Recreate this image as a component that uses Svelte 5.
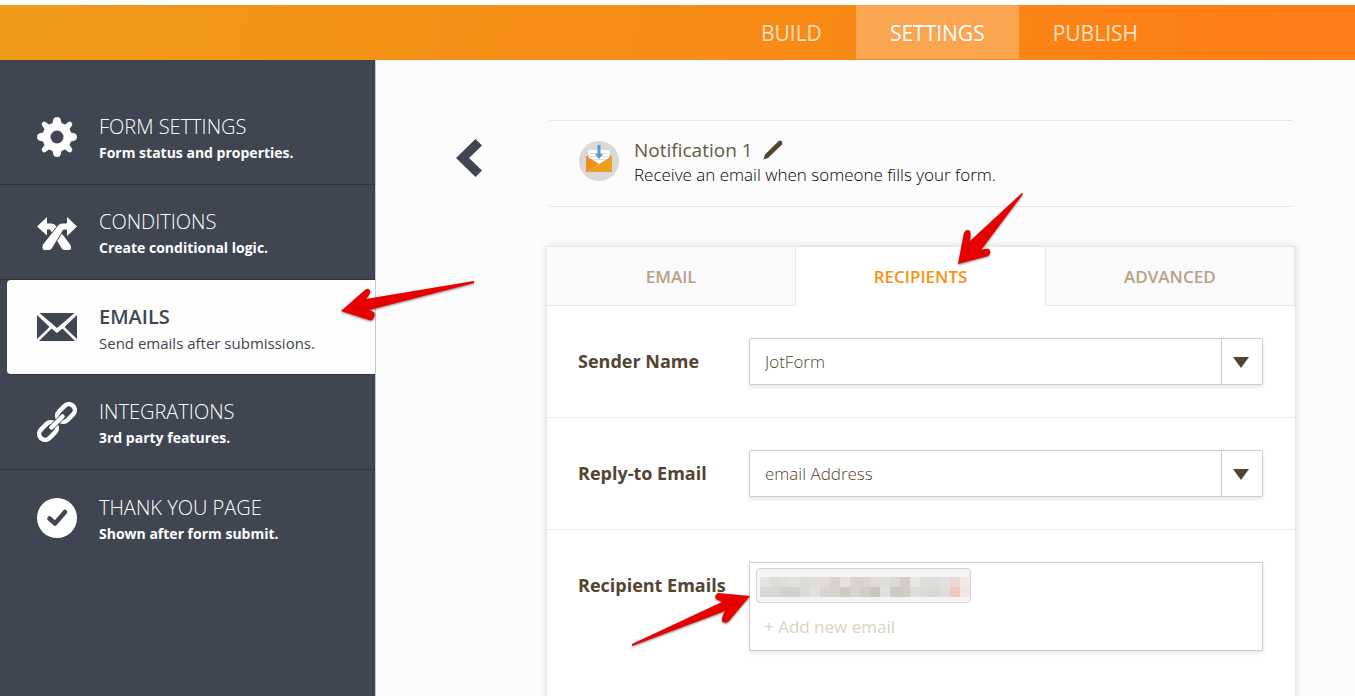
<script>
  const tabs = ["BUILD", "SETTINGS", "PUBLISH"];
  const panels = ["EMAIL", "RECIPIENTS", "ADVANCED"];
  const menu = [
    { icon: "gear", title: "FORM SETTINGS", text: "Form status and properties." },
    { icon: "conditions", title: "CONDITIONS", text: "Create conditional logic." },
    { icon: "mail", title: "EMAILS", text: "Send emails after submissions." },
    { icon: "link", title: "INTEGRATIONS", text: "3rd party features." },
    { icon: "check", title: "THANK YOU PAGE", text: "Shown after form submit." },
  ];
  // hidden address, two rows of blocks
  const blocks = [
    "#e4e3e2", "#dddcda", "#dfdedd", "#e1e1e1", "#dddbd8", "#e0dcda", "#dedcda", "#d6d2cd", "#e2e2e4", "#d8d4d0", "#d8d5d1", "#dddcda", "#dfdedb", "#dcdad8", "#d2cfc9", "#e7e6e5", "#dfdddb", "#dedddb", "#e3e1e0", "#efd6d0", "#f4e7e4",
    "#d8d7d3", "#d8d7d2", "#d5d2cd", "#d4d1cc", "#dbdad7", "#e0e0e0", "#d8d5d1", "#d7d4d0", "#cdc9c3", "#d7d5d0", "#d0ccc6", "#c9c4be", "#e0e0e0", "#cdcac3", "#cfccc5", "#dddcda", "#dbdad7", "#d8d8d3", "#dfdedc", "#ecc8be", "#f2e6e3",
  ];

  let activeTab = $state("SETTINGS");
  let activeMenu = $state("EMAILS");
  let activePanel = $state("RECIPIENTS");
  let sender = $state("JotForm");
  let replyTo = $state("email Address");
  let newEmail = $state("");
</script>

{#snippet icon(name)}
  <svg class="icon" viewBox="0 0 40 40" aria-hidden="true">
    {#if name === "gear"}
      <path fill="currentColor" fill-rule="evenodd" d="M16.500 2Q17 0 20 0t3.500 2l1 4 3.500 1.500L31.500 5Q33 4 34.500 5.500T35 8.500L32.500 12l1.500 3.500 4 1Q40 17 40 20t-2 3.500l-4 1-1.500 3.500 2.500 3.500Q36 33 34.500 34.500t-3 .500L28 32.500 24.500 34l-1 4Q23 40 20 40t-3.500-2l-1-4-3.500-1.500L8.500 35Q7 36 5.500 34.500T5 31.500L7.500 28 6 24.500l-4-1Q0 23 0 20t2-3.500l4-1L7.500 12 5 8.500Q4 7 5.500 5.500T8.500 5L12 7.500 15.500 6zM20 13.500a6.500 6.500 0 1 0 0 13 6.500 6.500 0 0 0 0-13z" />
    {:else if name === "conditions"}
      <path fill="currentColor" d="M0 14.500L10 5v6.500h4.500q3 0 5 3L33.500 33q2 5-2 5h-4q-2 0-3-2L13 17.500h-3v6z" />
      <path fill="currentColor" stroke="#3f4651" stroke-width="1" d="M40.500 14.500L29.500 4V11H25q-3 0-5.500 4L5.500 32.500q-2 6 2.500 6h4q2 0 3.500-2.500L26.500 18h3v7z" />
    {:else if name === "mail"}
      <path fill="currentColor" d="M2.500 6h35L20 21zM0 8l12.500 12L0 32zM40 8v24L27.500 20zM2 34l12.500-12.500L20 26l5.500-4.500L38 34z" />
    {:else if name === "link"}
      <g fill="none" stroke="currentColor" stroke-width="4.500">
        <rect x="-10" y="-6" width="20" height="12" rx="6" transform="translate(29 11) rotate(-45)" />
        <rect x="-10" y="-6" width="20" height="12" rx="6" transform="translate(11 29) rotate(-45)" />
      </g>
      <path stroke="#3f4651" stroke-width="6" stroke-linecap="round" d="M14.500 25.500l11-11" />
      <path stroke="currentColor" stroke-width="4.500" stroke-linecap="round" d="M14.500 25.500l11-11" />
    {:else}
      <circle cx="20" cy="20" r="20" fill="currentColor" />
      <path fill="none" stroke="#3f4651" stroke-width="4.500" stroke-linecap="round" stroke-linejoin="round" d="M12.500 20.500l5.500 5L28 14" />
    {/if}
  </svg>
{/snippet}

<header>
  <nav>
    {#each tabs as tab}
      <button class:active={activeTab === tab} onclick={() => (activeTab = tab)}>{tab}</button>
    {/each}
  </nav>
</header>

<div class="page">
  <aside>
    {#each menu as item}
      <button class="menuItem" class:active={activeMenu === item.title} onclick={() => (activeMenu = item.title)}>
        {@render icon(item.icon)}
        <span class="menuText">
          <span class="menuTitle">{item.title}</span>
          <span class="menuSub">{item.text}</span>
        </span>
      </button>
    {/each}
    <svg class="pointer pointerMenu" viewBox="0 0 134 42" aria-hidden="true">
      <path d="M0 31L24 10q4-3 5 1 1 2-4 8L133 1v2L28 30l5 2q2 3-1 7-1 2-4 1z" />
    </svg>
  </aside>

  <main>
    <button class="back" aria-label="Back">
      <svg viewBox="0 0 26 38" aria-hidden="true"><path fill="#3f4651" d="M19.500 0L26 6.500 13 19l13 12.500L19.500 38 0 19z" /></svg>
    </button>

    <div class="content">
      <section class="card">
        <svg class="badge" viewBox="0 0 40 40" aria-hidden="true">
          <circle cx="20" cy="20" r="20" fill="#d9d9d9" />
          <path fill="#d98a20" d="M7 16l4-3h18l4 3v4H7z" />
          <path fill="#fff" d="M9.500 9h21v14h-21z" />
          <path stroke="#ddd" d="M11 12.500h18M11 15.500h18M11 18.500h18" />
          <path fill="#f28c20" d="M7 15l13 8L7 31z" />
          <path fill="#eba024" d="M33 15v16H7l13-8z" />
          <path fill="#5599d4" d="M18.500 4h3v9H24l-4 5-4-5h2.500z" />
        </svg>
        <div>
          <h1>
            Notification 1
            <svg viewBox="0 0 20 20" aria-hidden="true"><path fill="#534431" d="M.500 19.500l1.500-5L15.500 1.200Q17 0 18.500 1.200T19 4.500L5 18z" /></svg>
          </h1>
          <p>Receive an email when someone fills your form.</p>
        </div>
      </section>

      <section class="panel">
        <div class="panelTabs">
          {#each panels as name}
            <button class:active={activePanel === name} onclick={() => (activePanel = name)}>{name}</button>
          {/each}
          <svg class="pointer pointerTab" viewBox="0 0 66 74" aria-hidden="true">
            <path d="M0 72L6 41q2-5 6-2 1 1 0 10L64 1l1 1-42 56q6-2 8-1 3 4-1 7z" />
          </svg>
        </div>

        <div class="row">
          <label for="sender">Sender Name</label>
          <div class="selectBox">
            <select id="sender" bind:value={sender}>
              <option>JotForm</option>
            </select>
          </div>
        </div>

        <div class="row">
          <label for="reply">Reply-to Email</label>
          <div class="selectBox">
            <select id="reply" bind:value={replyTo}>
              <option>email Address</option>
            </select>
          </div>
        </div>

        <div class="row last">
          <label for="recipients">Recipient Emails</label>
          <div class="recipients">
            <div class="chip">
              {#each blocks as color}
                <span style="background: {color}"></span>
              {/each}
            </div>
            <input id="recipients" type="email" placeholder="+ Add new email" bind:value={newEmail} />
            <svg class="pointer pointerField" viewBox="0 0 120 58" aria-hidden="true">
              <path d="M119 5L98 30q-3 3-6 1-3-2 2-11L1 55v-2L91 11 85 8q-2-4 2-6z" />
            </svg>
          </div>
        </div>
      </section>
    </div>
  </main>
</div>

<style>
  :global(body) {
    background: #fcfcfc;
    font-family: "Open Sans", "Noto Sans", sans-serif;
    overflow: hidden;
  }
  button {
    border: none;
    background: none;
    padding: 0;
    font-family: inherit;
    cursor: pointer;
  }
  header {
    border-top: 5px solid #fff;
    background: linear-gradient(100deg, #f09a1a, #f98815 65%, #ff7b16);
    background-clip: padding-box;
  }
  nav {
    display: flex;
    justify-content: flex-end;
    height: 55px;
    padding-right: 183px;
  }
  nav button {
    height: 54px;
    padding: 2px 34px 0;
    font-size: 21px;
    color: #fde0c0;
  }
  nav button.active {
    background: #faa550;
    color: #fff;
  }
  .page {
    display: flex;
    min-height: calc(100vh - 60px);
  }
  aside {
    position: relative;
    flex: none;
    width: 376px;
    box-sizing: border-box;
    padding-top: 30px;
    background: #3f4651;
    border-right: 1px solid #c5c8cb;
  }
  .menuItem {
    display: flex;
    align-items: center;
    gap: 22px;
    width: 100%;
    height: 95px;
    padding: 0 0 0 37px;
    border-bottom: 1px solid #2f3440;
    color: #fff;
    text-align: left;
  }
  .menuItem:nth-of-type(5) {
    border-bottom: none;
  }
  .menuItem.active {
    width: calc(100% - 6px);
    margin-left: 7px;
    padding-left: 30px;
    background: #fdfdfd;
    border-right: 1px solid #c5c8cb;
    border-radius: 4px 0 0 4px;
    color: #3f4651;
  }
  .icon {
    flex: none;
    width: 40px;
    height: 40px;
  }
  .menuText {
    display: flex;
    flex-direction: column;
    padding-top: 4px;
  }
  .menuTitle {
    font-size: 20px;
    line-height: 28px;
    font-weight: 300;
  }
  .menuSub {
    font-size: 14px;
    line-height: 24px;
    font-weight: 700;
  }
  .active .menuTitle {
    font-weight: 600;
  }
  .active .menuSub {
    font-size: 15px;
    font-weight: 500;
  }
  main {
    flex: 1;
    display: flex;
    align-items: flex-start;
    gap: 64px;
    padding: 60px 59px 0 80px;
  }
  .back {
    width: 26px;
    height: 38px;
    margin-top: 19px;
  }
  .back svg {
    display: block;
  }
  .content {
    flex: 1;
  }
  .card {
    display: flex;
    gap: 15px;
    height: 87px;
    box-sizing: border-box;
    padding: 16px 33px;
    border: solid #e9e6e6;
    border-width: 1px 0;
    border-radius: 5px;
  }
  .badge {
    width: 40px;
    height: 40px;
    margin-top: 4px;
  }
  h1 {
    display: flex;
    align-items: center;
    gap: 10px;
    margin: 0;
    font-size: 19px;
    line-height: 26px;
    font-weight: 400;
    color: #695742;
  }
  h1 svg {
    width: 20px;
    height: 20px;
  }
  p {
    margin: 0;
    font-size: 17px;
    line-height: 23px;
    font-weight: 300;
    color: #000;
  }
  .panel {
    margin-top: 39px;
    border: 1px solid #e9e7e5;
    border-bottom: none;
    background: #fff;
    box-shadow: 0 0 8px #0000001f;
    min-height: 460px;
  }
  .panelTabs {
    position: relative;
    display: grid;
    grid-template-columns: repeat(3, 1fr);
    height: 59px;
  }
  .panelTabs button {
    background: #fafafa;
    border-right: 1px solid #e9e9e9;
    border-bottom: 1px solid #e9e9e9;
    font-size: 17px;
    font-weight: 600;
    color: #b8a184;
  }
  .panelTabs button.active {
    background: #fff;
    border-bottom-color: #fff;
    color: #fa9112;
  }
  .row {
    display: grid;
    grid-template-columns: 171px 1fr;
    padding: 32px 32px 32px 31px;
    border-bottom: 1px solid #ececec;
  }
  .row.last {
    border-bottom: none;
  }
  label {
    font-size: 18px;
    line-height: 47px;
    font-weight: 700;
    color: #534431;
    white-space: nowrap;
  }
  .selectBox {
    position: relative;
    height: 47px;
  }
  .selectBox::after {
    content: "";
    position: absolute;
    top: 19px;
    right: 14px;
    border: 8px solid transparent;
    border-top: 11px solid #534431;
    border-bottom: none;
    pointer-events: none;
  }
  select {
    appearance: none;
    width: 100%;
    height: 47px;
    padding: 0 56px 0 15px;
    border: 1px solid #d9cbc0;
    border-radius: 2px;
    background: linear-gradient(#d9cbc0, #d9cbc0) right 40px top / 1px 100% no-repeat #fff;
    box-shadow: 0 2px 4px #0000001a;
    font: 300 17px "Open Sans", sans-serif;
    color: #534431;
  }
  .recipients {
    position: relative;
    height: 89px;
    box-sizing: border-box;
    padding: 5px 6px;
    border: 1px solid #d9cbc0;
    box-shadow: 0 2px 4px #0000001a;
  }
  .chip {
    display: grid;
    grid-template-columns: repeat(21, 10px);
    grid-auto-rows: 10px;
    width: 215px;
    height: 35px;
    box-sizing: border-box;
    padding: 8px 0 0 3px;
    border: 1px solid #d5d5d5;
    border-radius: 4px;
    background: #f4f4f4;
  }
  input {
    display: block;
    width: 100%;
    height: 40px;
    margin-top: 3px;
    box-sizing: border-box;
    padding: 0 8px;
    border: none;
    background: none;
    outline: none;
    font: 17px "Open Sans", sans-serif;
  }
  input::placeholder {
    color: #dcd2c6;
    opacity: 1;
  }
  .pointer {
    position: absolute;
    z-index: 2;
    fill: #e60000;
    filter: drop-shadow(0 1px 1px #00000080);
    pointer-events: none;
  }
  .pointerMenu {
    top: 220px;
    left: 341px;
    width: 134px;
  }
  .pointerTab {
    top: -55px;
    left: 55%;
    width: 66px;
  }
  .pointerField {
    top: 28px;
    left: -119px;
    width: 120px;
  }
</style>
